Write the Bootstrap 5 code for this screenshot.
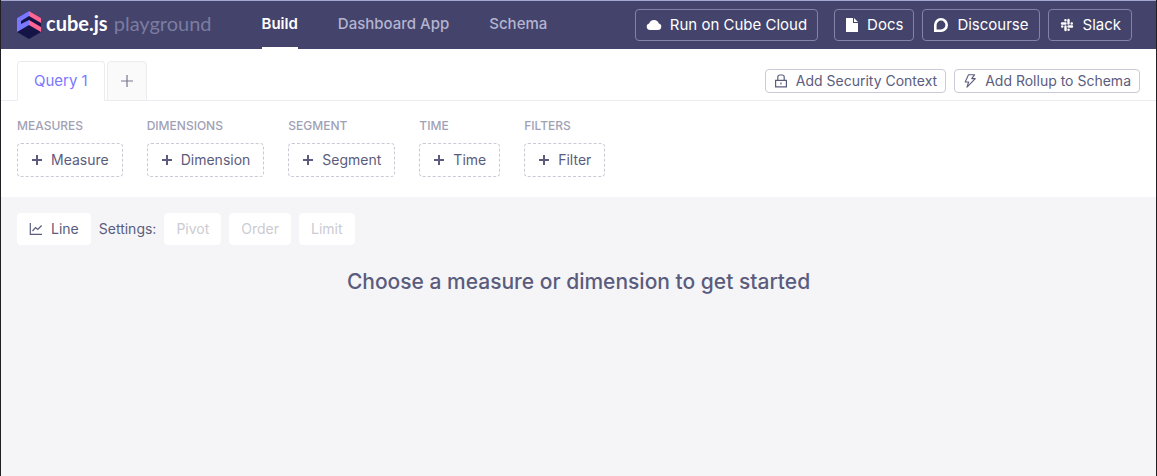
<!DOCTYPE html>
<html lang="en">
<head>
<meta charset="utf-8">
<meta name="viewport" content="width=device-width, initial-scale=1">
<title>Cube.js Playground</title>
<link href="https://cdn.jsdelivr.net/npm/bootstrap@5.3.0/dist/css/bootstrap.min.css" rel="stylesheet">
<style>
  body { font-family: Inter, "Liberation Sans", sans-serif; font-size: 14px; line-height: 22px; color: #5b5c7d; background: #f5f5f8; }
  .app-frame { border: solid #1f1f24; border-width: 0 1px; }
  .topbar { background: #43436b; border-top: 1px solid #a3a6d0; padding: 0 24px 0 16px; height: 49px; }
  .brand { font-family: Lato, sans-serif; font-size: 20px; gap: 5px; line-height: 24px; color: #fff; }
  .brand-text { padding-bottom: 4px; }
  .brand-name { font-weight: 700; }
  .brand-sub { color: #7c7ca0; margin-left: 1px; }
  .main-nav { gap: 40px; margin-left: 50px; }
  .main-nav a { color: #b4b4d0; font-weight: 500; font-size: 15px; line-height: 46px; text-decoration: none; border-bottom: 2px solid transparent; }
  .main-nav a.active { color: #fff; font-weight: 600; border-color: #fff; }
  .tool { --bs-btn-font-size: 14px; --bs-btn-line-height: 22px; --bs-btn-border-radius: 4px; --bs-btn-color: #5b5c7d; display: inline-flex; align-items: center; gap: 8px; white-space: nowrap; }
  .tool-top { --bs-btn-font-size: 15px; --bs-btn-color: #fff; --bs-btn-border-color: #8383a8; --bs-btn-padding-x: 10px; --bs-btn-padding-y: 4px; }
  .tool-small { --bs-btn-bg: #fff; --bs-btn-border-color: #cacad6; --bs-btn-padding-x: 8px; --bs-btn-padding-y: 0; }
  .tool-add { --bs-btn-padding-x: 13px; --bs-btn-padding-y: 5px; border: 1px dashed #cacad6; }
  .tool-flat { --bs-btn-bg: #fff; --bs-btn-padding-x: 11px; --bs-btn-padding-y: 4px; --bs-btn-disabled-color: #cbcbd2; --bs-btn-disabled-bg: #fff; --bs-btn-disabled-border-color: #fff; --bs-btn-disabled-opacity: 1; }
  .tabs-row { padding: 12px 16px 0; border-bottom: 1px solid #ececf0; }
  .query-tabs { gap: 2px; }
  .query-tab { height: 40px; margin-bottom: -1px; border: 1px solid #ececf0; border-radius: 4px 4px 0 0; background: #fafafa; padding: 0 12px; color: #77788f; }
  .query-tab.active { color: #7a77ff; background: #fff; border-bottom-color: #fff; padding: 0 16px; font-size: 15px; }
  .builder { padding: 16px 16px 20px; gap: 24px; }
  .field-title { font-size: 12px; line-height: 18px; font-weight: 500; color: #a1a1b5; margin: 0 0 8px; }
  .settings { padding: 16px; gap: 8px; }
  .prompt { font-size: 21px; line-height: 28px; font-weight: 500; margin: 7px 0 0; }
</style>
</head>
<body>
<div class="app-frame min-vh-100">
  <header class="topbar d-flex align-items-stretch">
    <a href="#" class="brand d-flex align-items-center text-decoration-none">
      <svg width="24" height="28" viewBox="0 0 24 28" aria-hidden="true">
        <path fill="#141446" d="M0 7 12 0l12 7v14l-12 7-12-7z"/>
        <path fill="#7a77ff" d="M0 7 12 0v5L4 10v3l8-4v5L0 21z"/>
        <path fill="#ff6492" d="m12 0 12 7v5L12 5zM12 9l12 7v5l-12-7z"/>
      </svg>
      <span class="brand-text"><span class="brand-name">cube.js</span> <span class="brand-sub">playground</span></span>
    </a>
    <nav class="main-nav d-flex">
      <a href="#" class="active" aria-current="page">Build</a>
      <a href="#">Dashboard App</a>
      <a href="#">Schema</a>
    </nav>
    <div class="d-flex align-items-center gap-2 ms-auto">
      <button type="button" class="btn tool tool-top me-2">
        <svg width="16" height="16" viewBox="0 0 16 16" fill="currentColor" aria-hidden="true"><path d="M4 13a3.300 3.300 0 0 1-.8-6.500 5 5 0 0 1 9.600 0A3.300 3.300 0 0 1 12 13z"/></svg>
        Run on Cube Cloud</button>
      <button type="button" class="btn tool tool-top">
        <svg width="14" height="16" viewBox="1 0 14 16" fill="currentColor" aria-hidden="true"><path d="M2 1h7v5h5v9H2zM10 1l4 4h-4z"/></svg>
        Docs</button>
      <button type="button" class="btn tool tool-top">
        <svg width="16" height="16" viewBox="0 0 16 16" aria-hidden="true"><path fill="none" stroke="currentColor" stroke-width="2.600" d="M2.300 13.700V8a5.700 5.700 0 1 1 5.700 5.700z"/></svg>
        Discourse</button>
      <button type="button" class="btn tool tool-top">
        <svg width="16" height="16" viewBox="0 0 16 16" fill="none" stroke="currentColor" stroke-width="2.400" stroke-linecap="round" aria-hidden="true"><path d="M9.500 3v3.500M3 6.500h3.500M9.500 9.500H13M6.500 9.500V13M6.400 3.200h.1M12.700 6.500h.1M9.500 12.800h.1M3.200 9.500h.1"/></svg>
        Slack</button>
    </div>
  </header>

  <main>
    <section class="bg-white">
      <div class="tabs-row d-flex justify-content-between align-items-start">
        <div class="query-tabs d-flex" role="tablist">
          <button type="button" class="query-tab active" role="tab" aria-selected="true">Query 1</button>
          <button type="button" class="query-tab d-flex align-items-center" aria-label="Add query">
            <svg width="14" height="14" viewBox="0 0 14 14" stroke="currentColor" stroke-width="1.200" aria-hidden="true"><path d="M7 1v12M1 7h12"/></svg>
          </button>
        </div>
        <div class="d-flex gap-2 mt-2">
          <button type="button" class="btn tool tool-small">
            <svg width="14" height="14" viewBox="0 0 14 14" fill="none" stroke="currentColor" stroke-width="1.200" aria-hidden="true"><path d="M1.600 6.300h10.800v6.600H1.600zM3.800 6.300V3a2 2 0 0 1 2-2h2.400a2 2 0 0 1 2 2v3.300M7 8.600v2"/></svg>
            Add Security Context</button>
          <button type="button" class="btn tool tool-small">
            <svg width="14" height="14" viewBox="0 0 14 14" fill="none" stroke="currentColor" stroke-width="1.100" stroke-linejoin="round" aria-hidden="true"><path d="M5.500.8h6L8.700 4.600h3.600L4 13.200l1.600-5.200H2.200z"/></svg>
            Add Rollup to Schema</button>
        </div>
      </div>
      <div class="builder d-flex flex-wrap">
        <div><h2 class="field-title">MEASURES</h2>
          <button type="button" class="btn tool tool-add"><svg width="12" height="12" viewBox="0 0 12 12" stroke="currentColor" stroke-width="2" aria-hidden="true"><path d="M6 1v10M1 6h10"/></svg>Measure</button></div>
        <div><h2 class="field-title">DIMENSIONS</h2>
          <button type="button" class="btn tool tool-add"><svg width="12" height="12" viewBox="0 0 12 12" stroke="currentColor" stroke-width="2" aria-hidden="true"><path d="M6 1v10M1 6h10"/></svg>Dimension</button></div>
        <div><h2 class="field-title">SEGMENT</h2>
          <button type="button" class="btn tool tool-add"><svg width="12" height="12" viewBox="0 0 12 12" stroke="currentColor" stroke-width="2" aria-hidden="true"><path d="M6 1v10M1 6h10"/></svg>Segment</button></div>
        <div><h2 class="field-title">TIME</h2>
          <button type="button" class="btn tool tool-add"><svg width="12" height="12" viewBox="0 0 12 12" stroke="currentColor" stroke-width="2" aria-hidden="true"><path d="M6 1v10M1 6h10"/></svg>Time</button></div>
        <div><h2 class="field-title">FILTERS</h2>
          <button type="button" class="btn tool tool-add"><svg width="12" height="12" viewBox="0 0 12 12" stroke="currentColor" stroke-width="2" aria-hidden="true"><path d="M6 1v10M1 6h10"/></svg>Filter</button></div>
      </div>
    </section>
    <section>
      <div class="settings d-flex align-items-center">
        <button type="button" class="btn tool tool-flat">
          <svg width="14" height="14" viewBox="0 0 14 14" fill="none" stroke="currentColor" stroke-width="1.200" aria-hidden="true"><path d="M1.300 1v11.400H13M3.500 9l3-3.500 2.300 2L12.600 3.500"/></svg>
          Line</button>
        <span>Settings:</span>
        <button type="button" class="btn tool tool-flat" disabled>Pivot</button>
        <button type="button" class="btn tool tool-flat" disabled>Order</button>
        <button type="button" class="btn tool tool-flat" disabled>Limit</button>
      </div>
      <h1 class="prompt text-center">Choose a measure or dimension to get started</h1>
    </section>
  </main>
</div>
<script src="https://cdn.jsdelivr.net/npm/bootstrap@5.3.0/dist/js/bootstrap.bundle.min.js"></script>
</body>
</html>
